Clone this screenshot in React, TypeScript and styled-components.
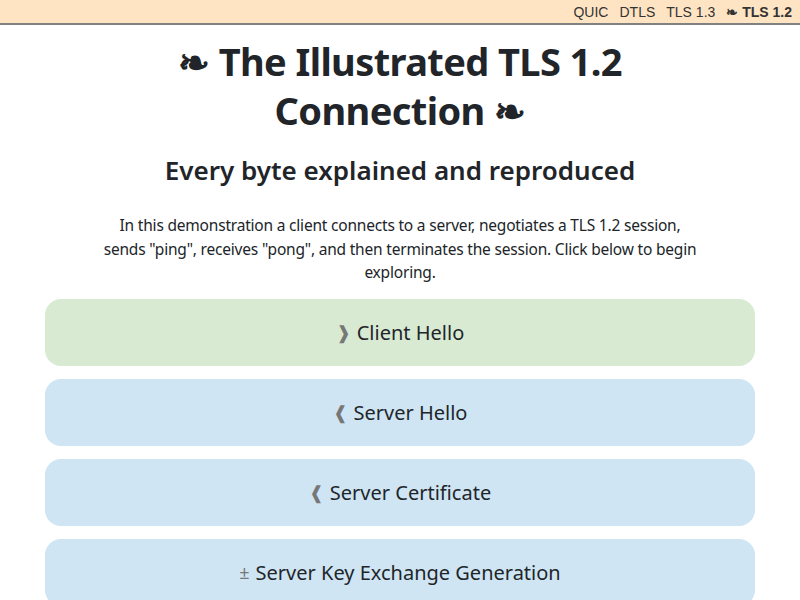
import styled, { createGlobalStyle } from 'styled-components';

const GlobalStyle = createGlobalStyle`
  html, body {
    margin: 0;
    padding: 0;
    background: #fff;
  }
  body {
    font-family: 'Noto Sans', 'Open Sans', sans-serif;
    color: #212529;
  }
`;

type Kind = 'client' | 'server';

const records: { kind: Kind; icon: string; label: string }[] = [
  { kind: 'client', icon: '❱', label: 'Client Hello' },
  { kind: 'server', icon: '❰', label: 'Server Hello' },
  { kind: 'server', icon: '❰', label: 'Server Certificate' },
  { kind: 'server', icon: '±', label: 'Server Key Exchange Generation' },
];

const navItems = [
  { label: 'QUIC', current: false },
  { label: 'DTLS', current: false },
  { label: 'TLS 1.3', current: false },
  { label: '❧ TLS 1.2', current: true },
];

const App = () => {
  return (
    <>
      <GlobalStyle />
      <TopNav>
        {navItems.map((x) => (
          <NavLink key={x.label} $current={x.current}>
            {x.label}
          </NavLink>
        ))}
      </TopNav>
      <Main>
        <Title>❧ The Illustrated TLS 1.2 Connection ❧</Title>
        <Subtitle>Every byte explained and reproduced</Subtitle>
        <Intro>
          In this demonstration a client connects to a server, negotiates a TLS
          1.2 session, sends "ping", receives "pong", and then terminates the
          session. Click below to begin exploring.
        </Intro>
        <RecordList>
          {records.map((r) => (
            <Record key={r.label} $kind={r.kind}>
              <RecordIcon>{r.icon}</RecordIcon> {r.label}
            </Record>
          ))}
        </RecordList>
      </Main>
    </>
  );
};

export default App;

const TopNav = styled.nav`
  display: flex;
  justify-content: flex-end;
  align-items: center;
  gap: 11px;
  height: 23px;
  padding: 0 8px;
  background: #ffe4c4;
  border-bottom: 2px solid #808080;
  font-family: 'Liberation Sans', Arial, sans-serif;
  font-size: 14px;
`;

const NavLink = styled.a<{ $current: boolean }>`
  color: #333;
  text-decoration: none;
  font-weight: ${(p) => (p.$current ? 700 : 400)};
  cursor: pointer;
`;

const Main = styled.main`
  display: flex;
  flex-direction: column;
  align-items: center;
  padding: 0 45px;
`;

const Title = styled.h1`
  max-width: 500px;
  margin: 12px 0 0;
  font-size: 38px;
  line-height: 49px;
  font-weight: 700;
  letter-spacing: -0.6px;
  text-align: center;
`;

const Subtitle = styled.h2`
  margin: 17px 0 0;
  font-size: 26px;
  line-height: 36px;
  font-weight: 600;
  text-align: center;
`;

const Intro = styled.p`
  max-width: 600px;
  margin: 26px 0 0;
  font-size: 15.5px;
  line-height: 23.5px;
  letter-spacing: -0.2px;
  text-align: center;
`;

const RecordList = styled.div`
  display: flex;
  flex-direction: column;
  gap: 13px;
  width: 100%;
  margin-top: 14px;
`;

const Record = styled.div<{ $kind: Kind }>`
  display: flex;
  justify-content: center;
  align-items: center;
  gap: 6px;
  height: 67px;
  border-radius: 16px;
  background: ${(p) => (p.$kind === 'client' ? '#d9ead3' : '#cfe5f3')};
  font-size: 20px;
  color: #212529;
  cursor: pointer;
`;

const RecordIcon = styled.span`
  color: #777;
  font-size: 18px;
`;
